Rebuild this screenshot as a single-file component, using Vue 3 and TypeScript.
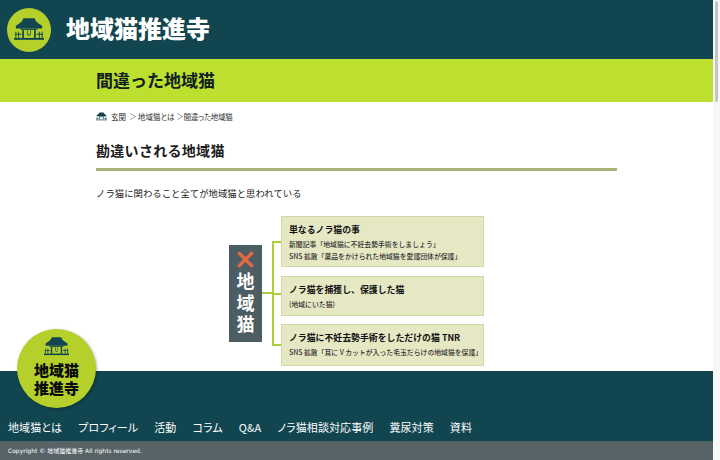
<script setup lang="ts">
const navItems: string[] = ['地域猫とは', 'プロフィール', '活動', 'コラム', 'Q&A', 'ノラ猫相談対応事例', '糞尿対策', '資料']
const cards = [
  { title: '単なるノラ猫の事', lines: ['新聞記事「地域猫に不妊去勢手術をしましょう」', 'SNS 拡散「薬品をかけられた地域猫を愛護団体が保護」'] },
  { title: 'ノラ猫を捕獲し、保護した猫', lines: ['(地域にいた猫)'] },
  { title: 'ノラ猫に不妊去勢手術をしただけの猫 TNR', lines: ['SNS 拡散「耳に V カットが入った毛玉だらけの地域猫を保護」'] },
]
</script>

<template>
  <div class="page">
    <div class="scroll">
      <header class="header">
        <span class="logo-circle">
          <svg class="temple" viewBox="0 0 32 24"><use href="#temple-shape" /></svg>
        </span>
        <span class="site-name">地域猫推進寺</span>
      </header>
      <div class="band"><h1>間違った地域猫</h1></div>
      <main class="main">
        <nav class="crumbs">
          <svg class="crumb-icon" viewBox="0 0 32 24"><use href="#temple-shape" /></svg>
          <span class="home">玄関</span>
          <svg class="sep" viewBox="0 0 7 8"><path d="M.5.5 6.500 4 .5 7.500" /></svg><span>地域猫とは</span>
          <svg class="sep second" viewBox="0 0 7 8"><path d="M.5.5 6.500 4 .5 7.500" /></svg><span class="current">間違った地域猫</span>
        </nav>
        <h2>勘違いされる地域猫</h2>
        <p class="lead">ノラ猫に関わること全てが地域猫と思われている</p>
        <div class="diagram">
          <div class="tag">
            <svg class="cross" viewBox="0 0 20 20"><path d="M2.500 2.500 17.500 17.500M17.500 2.500 2.500 17.500" /></svg>
            <span>地</span><span>域</span><span>猫</span>
          </div>
          <div class="stem"></div>
          <div class="cards">
            <article v-for="c in cards" :key="c.title" class="card">
              <h3>{{ c.title }}</h3>
              <p v-for="l in c.lines" :key="l">{{ l }}</p>
            </article>
          </div>
        </div>
      </main>
    </div>
    <footer class="footer">
      <div class="badge">
        <svg class="badge-temple" viewBox="0 0 32 24"><use href="#temple-shape" /></svg>
        <span>地域猫</span><span>推進寺</span>
      </div>
      <nav class="fnav"><a v-for="n in navItems" :key="n">{{ n }}</a></nav>
      <div class="copy">Copyright © 地域猫推進寺 All rights reserved.</div>
    </footer>
    <div class="bar"><div class="thumb"></div></div>
    <svg width="0" height="0" class="defs">
      <defs>
        <g id="temple-shape">
          <path d="M10 0h12l1 2.500c1.500 2 4 4 7 5.500v3H2V8c3-1.500 5.500-3.500 7-5.500z" />
          <path d="M7 11h18v1.400H7z" />
          <path d="M8.800 12.400h1.800V21H8.800zM21.400 12.400h1.800V21h-1.800z" />
          <path d="M14 12.400h.7v3.600c0 1 .6 1.600 1.300 1.600s1.300-.6 1.300-1.600v-3.600h.7v3.800c0 1.500-.9 2.400-2 2.400s-2-.9-2-2.400z" />
          <path d="M1 16.500h7v1H1zM24 16.500h7v1h-7zM1.500 14.500h1V21h-1zM4.500 14.500h1V21h-1zM26.500 14.500h1V21h-1zM29.500 14.500h1V21h-1z" />
          <path d="M0 21h32v2H0z" />
        </g>
      </defs>
    </svg>
  </div>
</template>

<style>
html, body { margin: 0; height: 460px; overflow: hidden; background: #fff; }
</style>

<style scoped>
.page {
  position: relative;
  width: 720px;
  height: 460px;
  overflow: hidden;
  display: flex;
  flex-direction: column;
  font-family: "Noto Sans CJK JP", "Noto Sans", sans-serif;
  color: #222;
}
.scroll { flex: 1; min-height: 0; overflow: hidden; }
.defs { position: absolute; }
.header {
  height: 59px;
  background: #11454f;
  display: flex;
  align-items: center;
  padding-left: 7px;
  gap: 15px;
}
.logo-circle {
  width: 44px;
  height: 44px;
  border-radius: 50%;
  background: #b5cf2b;
  display: flex;
  align-items: center;
  justify-content: center;
}
.temple { width: 30px; height: 23px; fill: #11454f; }
.site-name {
  color: #fff;
  font-size: 24px;
  font-weight: 900;
  line-height: 1;
  margin-bottom: 3px;
}
.band {
  height: 43px;
  background: #bde030;
  padding-left: 96px;
  display: flex;
  align-items: center;
}
h1 { margin: 0 0 3px; font-size: 17px; font-weight: 700; color: #10201f; line-height: 1; }
.main { padding-left: 96px; width: 521px; }
.crumbs {
  display: flex;
  align-items: center;
  height: 12px;
  margin-top: 8px;
  font-size: 7.500px;
  color: #333;
  font-feature-settings: "palt";
}
.crumb-icon { width: 11px; height: 9px; fill: #11454f; margin-right: 4px; }
.sep { width: 6px; height: 7px; margin: 0 2px 0 4px; fill: none; stroke: #555; stroke-width: .7; }
.sep.second { margin: 0 1px 0 2px; }
.current { letter-spacing: -.25px; }
h2 {
  margin: 0;
  padding-top: 17px;
  height: 29px;
  box-sizing: content-box;
  font-size: 14px;
  font-weight: 700;
  line-height: 22px;
  letter-spacing: .3px;
  color: #1c1c1c;
  border-bottom: 3px solid #a8b27a;
}
.lead { margin: 14px 0 0; font-size: 9.400px; line-height: 16px; color: #222; }
.diagram {
  display: flex;
  align-items: flex-start;
  margin-top: 15px;
  margin-left: 133px;
}
.tag {
  width: 33px;
  height: 97px;
  margin-top: 29px;
  background: #4c5e64;
  color: #fff;
  display: flex;
  flex-direction: column;
  align-items: center;
  font-size: 18px;
  font-weight: 700;
  padding-top: 5px;
  box-sizing: border-box;
}
.tag span { height: 21.500px; line-height: 21.500px; }
.cross { width: 19px; height: 19px; margin-bottom: 1px; fill: none; stroke: #e8693f; stroke-width: 3.500; flex: none; }
.stem { width: 10px; height: 2px; background: #a8cf3a; margin-top: 76px; }
.cards {
  position: relative;
  display: flex;
  flex-direction: column;
  gap: 8px;
  padding-left: 9px;
}
.cards::before {
  content: "";
  position: absolute;
  left: 0;
  top: 25px;
  bottom: 20px;
  width: 2px;
  background: #a8cf3a;
}
.card {
  position: relative;
  width: 203px;
  box-sizing: border-box;
  background: #e6e8c4;
  border: 1px solid #d4d8a8;
  padding: 6px 7px 0;
  color: #222;
}
.card::before {
  content: "";
  position: absolute;
  left: -8px;
  top: 24px;
  width: 7px;
  height: 2px;
  background: #a8cf3a;
}
.card:nth-child(1) { height: 51px; }
.card:nth-child(2) { height: 40px; margin-top: 1px; }
.card:nth-child(2)::before { top: 16px; }
.card:nth-child(3) { height: 42px; }
.card:nth-child(3)::before { top: 19px; }
h3 { margin: 0 0 1px; font-size: 8.900px; font-weight: 700; line-height: 14px; color: #111; }
.card p { margin: 0; font-size: 6.850px; line-height: 12px; white-space: nowrap; font-weight: 500; color: #333; }
.footer { position: relative; flex: none; background: #11454f; }
.badge {
  position: absolute;
  left: 17px;
  top: -42px;
  width: 79px;
  height: 79px;
  border-radius: 50%;
  background: #b5cf2b;
  box-shadow: 1px 1px 3px rgba(0, 0, 0, .3);
  display: flex;
  flex-direction: column;
  align-items: center;
  color: #0a0a0a;
  font-size: 15px;
  font-weight: 900;
  line-height: 18px;
  padding-top: 8px;
  box-sizing: border-box;
}
.badge-temple { width: 25px; height: 19px; fill: #11454f; margin-bottom: 5px; flex: none; }
.fnav {
  height: 70px;
  box-sizing: border-box;
  padding: 48px 0 0 8px;
  display: flex;
  gap: 16px;
  color: #fff;
  font-size: 11px;
  line-height: 16px;
  letter-spacing: .1px;
  font-feature-settings: "palt";
}
.copy {
  height: 19px;
  background: #566468;
  color: #fff;
  font-family: "DejaVu Sans", "Noto Sans CJK JP", sans-serif;
  font-size: 6px;
  line-height: 19px;
  padding-left: 8px;
}
.bar { position: absolute; right: 0; top: 0; width: 7px; height: 460px; background: #f8f8f8; }
.thumb { margin: 1px 0 0 2px; width: 3px; height: 101px; background: #c4c4c4; border-radius: 2px; }
</style>
